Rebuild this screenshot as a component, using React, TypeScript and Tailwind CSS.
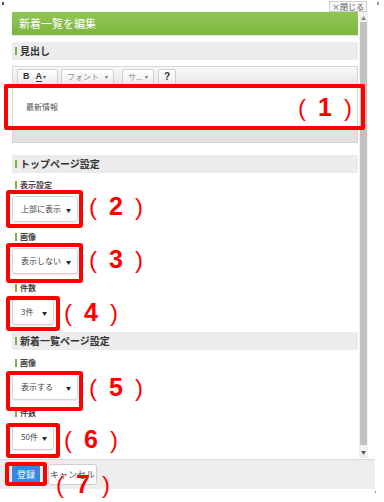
import React from "react";

const jp = { fontFamily: '"Noto Sans CJK JP", "Noto Sans", sans-serif' };

function SectionBar({ title }: { title: string }) {
  return (
    <div className="flex h-[18px] items-center bg-[#ececec] pl-[3px]">
      <span className="mr-[3px] h-[8px] w-[2px] bg-[#7cb342]" />
      <span className="text-[10px] font-bold leading-none text-[#333]">{title}</span>
    </div>
  );
}

function FieldLabel({ text }: { text: string }) {
  return (
    <div className="flex h-[10px] items-center pl-[3px]">
      <span className="mr-[3px] h-[8px] w-[2px] bg-[#7cb342]" />
      <span className="text-[8px] font-bold leading-none text-[#444]">{text}</span>
    </div>
  );
}

function FakeSelect({ value, width }: { value: string; width: string }) {
  return (
    <div
      className={`flex h-[26px] items-center justify-between rounded-[3px] border border-[#d4d4d4] bg-white pl-[8px] pr-[6px] shadow-[0_1px_1px_rgba(0,0,0,0.08)] ${width}`}
    >
      <span className="text-[8px] leading-none text-[#444]">{value}</span>
      <span className="text-[5px] leading-none text-[#222]">▼</span>
    </div>
  );
}

function ToolButton({ children, className = "" }: { children: React.ReactNode; className?: string }) {
  return (
    <div
      className={`flex h-[16px] items-center rounded-[2px] border border-[#cfcfcf] bg-gradient-to-b from-white to-[#ececec] px-[5px] ${className}`}
    >
      {children}
    </div>
  );
}

function Mark({ n, className }: { n: string; className: string }) {
  return (
    <div
      className={`absolute flex items-center text-[#ff0000] ${className}`}
      style={{ fontFamily: '"Liberation Sans", Arial, sans-serif' }}
    >
      <span className="text-[24px] leading-none">(</span>
      <span className="mx-[12px] text-[25px] font-bold leading-none">{n}</span>
      <span className="text-[24px] leading-none">)</span>
    </div>
  );
}

export default function App() {
  return (
    <div className="relative h-[502px] w-[384px] overflow-hidden bg-white" style={jp}>
      {/* close button */}
      <div className="absolute right-[17px] top-[1px] flex h-[11px] items-center border border-[#cfcfcf] bg-[#f7f7f7] px-[2px] text-[8px] leading-none text-[#555]">
        ×閉じる
      </div>
      <span className="absolute left-[2px] top-[2px] h-[3px] w-[2px] bg-[#555]" />
      <span className="absolute right-[5px] top-[2px] h-[3px] w-[2px] bg-[#999]" />
      <span className="absolute bottom-[9px] right-[8px] h-[2px] w-[1px] bg-[#999]" />

      <div className="flex pt-[12px]">
        {/* content */}
        <div className="ml-[12px] flex h-[446px] w-[346px] flex-col">
          <div className="flex h-[23px] items-center bg-gradient-to-b from-[#92c654] to-[#7db540] pl-[7px] shadow-[0_1px_1px_rgba(0,0,0,0.1)]">
            <span className="text-[11px] leading-none text-white">新着一覧を編集</span>
          </div>

          <div className="mt-[7px]">
            <SectionBar title="見出し" />
          </div>

          <div className="mt-[6px] flex h-[21px] items-center gap-[3px] border border-[#d8d8d8] bg-gradient-to-b from-[#f8f8f8] to-[#e6e6e6] pl-[4px]">
            <ToolButton className="w-[41px] gap-[6px]">
              <span className="text-[9px] font-bold leading-none text-[#333]" style={{ fontFamily: '"Liberation Sans", Arial, sans-serif' }}>B</span>
              <span className="flex items-center">
                <span className="border-b border-[#333] text-[9px] font-bold leading-none text-[#333]" style={{ fontFamily: '"Liberation Sans", Arial, sans-serif' }}>A</span>
                <span className="ml-[1px] text-[6px] text-[#555]">▾</span>
              </span>
            </ToolButton>
            <ToolButton className="w-[53px] justify-between">
              <span className="text-[8px] leading-none text-[#888]">フォント</span>
              <span className="text-[6px] text-[#777]">▾</span>
            </ToolButton>
            <ToolButton className="ml-[5px] w-[32px] justify-between">
              <span className="text-[8px] leading-none text-[#888]">サ...</span>
              <span className="text-[6px] text-[#777]">▾</span>
            </ToolButton>
            <ToolButton className="ml-[1px] w-[18px] justify-center px-0">
              <span className="text-[10px] font-bold leading-none text-[#333]" style={{ fontFamily: '"Liberation Sans", Arial, sans-serif' }}>?</span>
            </ToolButton>
          </div>

          <div className="flex h-[40px] items-center border-x border-[#d8d8d8] bg-white pl-[13px]">
            <span className="text-[8px] leading-none text-[#555]">最新情報</span>
          </div>
          <div className="h-[16px] border border-t-0 border-[#d2d2d2] bg-[#e2e2e2]" />

          <div className="mt-[12px]">
            <SectionBar title="トップページ設定" />
          </div>

          <div className="mt-[7px]">
            <FieldLabel text="表示設定" />
          </div>
          <div className="mt-[6px]">
            <FakeSelect value="上部に表示" width="w-[66px]" />
          </div>

          <div className="mt-[10px]">
            <FieldLabel text="画像" />
          </div>
          <div className="mt-[6px]">
            <FakeSelect value="表示しない" width="w-[66px]" />
          </div>

          <div className="mt-[9px]">
            <FieldLabel text="件数" />
          </div>
          <div className="mt-[6px]">
            <FakeSelect value="3件" width="w-[42px]" />
          </div>

          <div className="mt-[7px]">
            <SectionBar title="新着一覧ページ設定" />
          </div>

          <div className="mt-[8px]">
            <FieldLabel text="画像" />
          </div>
          <div className="mt-[6px]">
            <FakeSelect value="表示する" width="w-[66px]" />
          </div>

          <div className="mt-[8px]">
            <FieldLabel text="件数" />
          </div>
          <div className="mt-[6px]">
            <FakeSelect value="50件" width="w-[42px]" />
          </div>
        </div>

        {/* scrollbar */}
        <div className="ml-[1px] flex h-[446px] w-[9px] flex-col items-center bg-[#f1f1f1]">
          <div className="flex h-[10px] items-center text-[5px] leading-none text-[#888]">▲</div>
          <div className="h-[423px] w-[7px] bg-[#c1c1c1]" />
          <div className="flex h-[13px] items-center text-[5px] leading-none text-[#555]">▼</div>
        </div>
      </div>

      {/* footer */}
      <div className="mt-[1px] flex h-[30px] w-[375px] items-center gap-[8px] border-t border-[#dcdcdc] bg-[#ededed] pl-[12px]">
        <div className="flex h-[17px] w-[28px] items-center justify-center bg-[#2e8ae6] text-[9px] leading-none text-white">
          登録
        </div>
        <div className="flex h-[21px] w-[49px] items-center justify-center rounded-[3px] border border-[#cfcfcf] bg-white text-[9px] leading-none text-[#555]">
          キャンセル
        </div>
      </div>

      {/* red annotations */}
      <div className="absolute left-[4px] top-[84px] h-[46px] w-[361px] rounded-[2px] border-[4px] border-[#ff0000]" />
      <Mark n="1" className="left-[298px] top-[95px]" />

      <div className="absolute left-[6px] top-[190px] h-[38px] w-[77px] rounded-[3px] border-[4px] border-[#ff0000]" />
      <Mark n="2" className="left-[89px] top-[194px]" />

      <div className="absolute left-[6px] top-[243px] h-[40px] w-[77px] rounded-[3px] border-[4px] border-[#ff0000]" />
      <Mark n="3" className="left-[89px] top-[247px]" />

      <div className="absolute left-[6px] top-[296px] h-[35px] w-[54px] rounded-[3px] border-[4px] border-[#ff0000]" />
      <Mark n="4" className="left-[64px] top-[300px]" />

      <div className="absolute left-[6px] top-[371px] h-[40px] w-[77px] rounded-[3px] border-[4px] border-[#ff0000]" />
      <Mark n="5" className="left-[89px] top-[375px]" />

      <div className="absolute left-[6px] top-[423px] h-[35px] w-[54px] rounded-[3px] border-[4px] border-[#ff0000]" />
      <Mark n="6" className="left-[64px] top-[427px]" />

      <div className="absolute left-[5px] top-[462px] h-[24px] w-[42px] rounded-[3px] border-[4px] border-[#ff0000]" />
      <Mark n="7" className="left-[56px] top-[472px]" />
    </div>
  );
}
